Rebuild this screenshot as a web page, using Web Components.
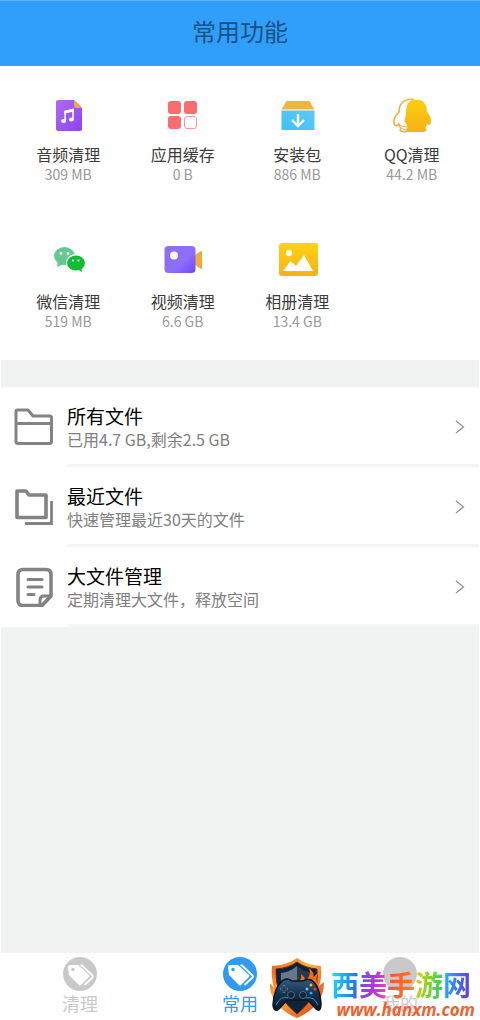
<!DOCTYPE html>
<html lang="zh-CN">
<head>
<meta charset="utf-8">
<meta name="viewport" content="width=device-width, initial-scale=1">
<title>常用功能</title>
<style>
  body {
    margin: 0;
    background: #fff;
    font-family: "Noto Sans CJK SC", sans-serif;
  }
</style>
</head>
<body>
<clean-app>
  <app-header slot="header">常用功能</app-header>

  <tool-grid>
    <tool-tile label="音频清理" size="309 MB">
      <svg width="40" height="40" viewBox="0 0 40 40" aria-hidden="true">
        <defs><linearGradient id="audio" x1="0" y1="0" x2="1" y2="1"><stop offset="0" stop-color="#ae6ced"/><stop offset="1" stop-color="#8d43f3"/></linearGradient></defs>
        <path d="M9 4H25L33 12V33Q33 35 31 35H9Q7 35 7 33V6Q7 4 9 4Z" fill="url(#audio)"/>
        <path d="M25 4L33 12H27Q25 12 25 10Z" fill="#eda83b"/>
        <path d="M16.200 25V15.500L24 13.500V23.500" fill="none" stroke="#fff" stroke-width="1.600"/>
        <path d="M15.400 14.800L24.800 12.400V15.400L15.400 17.800Z" fill="#fff"/>
        <ellipse cx="14.600" cy="25" rx="2.500" ry="2" fill="#fff"/><ellipse cx="22.400" cy="23.600" rx="2.500" ry="2" fill="#fff"/>
      </svg>
    </tool-tile>
    <tool-tile label="应用缓存" size="0 B">
      <svg width="40" height="40" viewBox="0 0 40 40" aria-hidden="true">
        <g fill="#f96d70"><rect x="5" y="5" width="13" height="13" rx="3"/><rect x="21" y="5" width="13" height="13" rx="3"/><rect x="5" y="20" width="13" height="13" rx="3"/></g>
        <rect x="21.500" y="20.500" width="12" height="12" rx="2.500" fill="#fff" stroke="#f59a9f"/>
      </svg>
    </tool-tile>
    <tool-tile label="安装包" size="886 MB">
      <svg width="40" height="40" viewBox="0 0 40 40" aria-hidden="true">
        <defs><linearGradient id="box" x1="0" y1="1" x2="1" y2="0"><stop offset="0" stop-color="#39c4fb"/><stop offset="1" stop-color="#62c8f2"/></linearGradient></defs>
        <path d="M8.500 5H31.500L36.500 13.500H3.500Z" fill="#efb63e"/>
        <path d="M3.500 14.500H36.500V34H3.500Z" fill="url(#box)"/>
        <path d="M20 18V29M14 24L20 30L26 24" fill="none" stroke="#fff" stroke-width="2.400"/>
      </svg>
    </tool-tile>
    <tool-tile label="QQ清理" size="44.2 MB">
      <svg width="40" height="40" viewBox="0 0 40 40" aria-hidden="true">
        <defs><linearGradient id="qq" x1="0" y1="0" x2="0" y2="1"><stop offset="0" stop-color="#fbcf0c"/><stop offset="1" stop-color="#f7af19"/></linearGradient></defs>
        <path d="M22 3.500C11 2 7 9 7 16C3 20 1 25 2.500 28.500C3.500 31 5.500 29 6.500 28C7 30 8 31 9 32C6 36 13 36 18 35" fill="#fff" stroke="#f1ae42" stroke-width="1.600"/>
        <path d="M24 3.500C32 3.500 35 9 35 16C39 20 40 25 38.500 28C37.500 30 36 28 35 28C34.500 30 34 31 33 32C36 34 35 36 29 36H19C14 36 13 34 16 32C15 30 14.500 29 14 27C12 27 12 24 14 19C14 13 14 4 24 3.500Z" fill="url(#qq)"/>
        <path d="M8 30Q11 32 14 30Q14 33 10 33.500Q8 33 8 30Z" fill="#fff"/>
        <path d="M6.500 28Q9 31.500 14 30L16 33Q13 35 9 32Q7 31 6.500 28Z" fill="none" stroke="#f1ae42" stroke-width="1"/>
      </svg>
    </tool-tile>
    <tool-tile label="微信清理" size="519 MB">
      <svg width="40" height="40" viewBox="0 0 40 40" aria-hidden="true">
        <ellipse cx="15.500" cy="13" rx="10.500" ry="9" fill="#64c991"/><path d="M9 18L8 24L15 21Z" fill="#64c991"/>
        <g fill="#fff"><circle cx="12" cy="10.500" r="1.400"/><circle cx="19" cy="10.500" r="1.400"/><ellipse cx="27" cy="19.500" rx="10" ry="8.500"/></g>
        <ellipse cx="27" cy="20" rx="9" ry="7.500" fill="#10bd35"/><path d="M28 26L33 29L32 23Z" fill="#10bd35"/>
        <g fill="#fff"><circle cx="24" cy="17.500" r="1.100"/><circle cx="29.500" cy="17.500" r="1.100"/></g>
      </svg>
    </tool-tile>
    <tool-tile label="视频清理" size="6.6 GB">
      <svg width="40" height="40" viewBox="0 0 40 40" aria-hidden="true">
        <defs><linearGradient id="video" x1="0" y1="0" x2="1" y2="1"><stop offset="0" stop-color="#8f6ef0"/><stop offset=".6" stop-color="#8b6ffb"/><stop offset="1" stop-color="#7344f5"/></linearGradient></defs>
        <path d="M32 12L38 8Q39 8 39 9V25Q39 26 38 26L32 22Z" fill="#f3ab38"/>
        <rect x="1.500" y="3" width="31" height="27" rx="4" fill="url(#video)"/>
        <circle cx="11" cy="12.500" r="4" fill="#fff"/>
      </svg>
    </tool-tile>
    <tool-tile label="相册清理" size="13.4 GB">
      <svg width="40" height="40" viewBox="0 0 40 40" aria-hidden="true">
        <defs><linearGradient id="photo" x1="0" y1="0" x2="0" y2="1"><stop offset="0" stop-color="#fbd313"/><stop offset="1" stop-color="#fbb117"/></linearGradient></defs>
        <rect x="1" y="3" width="39" height="33" rx="3" fill="url(#photo)" transform="translate(0 -3)"/>
        <circle cx="11" cy="10" r="3.200" fill="#fff"/>
        <path d="M5 28L12.500 18L18 23L26 12L35 28Z" fill="#fff"/>
      </svg>
    </tool-tile>
  </tool-grid>

  <file-list>
    <file-row heading="所有文件" detail="已用4.7 GB,剩余2.5 GB">
      <svg width="40" height="40" viewBox="0 0 40 40" fill="none" stroke="#838383" stroke-width="3" stroke-linejoin="round" aria-hidden="true">
        <path d="M4.500 3H15L20 9H36.500Q38.500 9 38.500 11V34.500Q38.500 36.500 36.500 36.500H5Q3 36.500 3 34.500V4.500Q3 3 4.500 3ZM3 16.500H38.500"/>
      </svg>
    </file-row>
    <file-row heading="最近文件" detail="快速管理最近30天的文件">
      <svg width="40" height="40" viewBox="0 0 40 40" fill="none" stroke="#838383" stroke-width="3.600" stroke-linejoin="round" aria-hidden="true">
        <path d="M4 4H13L16 8H33V30.500H4Z"/><path d="M12 36.500H38.500V14" stroke-width="2.800" stroke-linejoin="miter"/>
      </svg>
    </file-row>
    <file-row heading="大文件管理" detail="定期清理大文件，释放空间">
      <svg width="40" height="40" viewBox="0 0 40 40" fill="none" stroke="#838383" stroke-width="3.600" stroke-linejoin="round" aria-hidden="true">
        <path d="M10 2.500H33Q38 2.500 38 7.500V29L29 38.500H10Q5 38.500 5 33.500V7.500Q5 2.500 10 2.500Z"/>
        <path d="M27 38V33Q27 29 31 29H38" stroke-width="3"/><path d="M15 12.500H29M15 20H29M15 27.500H21" stroke-width="3" stroke-linecap="round"/>
      </svg>
    </file-row>
  </file-list>

  <tab-bar slot="footer">
    <tab-item label="清理"></tab-item>
    <tab-item label="常用" active></tab-item>
    <tab-item label="我的" plain></tab-item>
  </tab-bar>
  <site-mark slot="footer"></site-mark>
</clean-app>

<script>
/** Base class, puts the markup returned by render() in an open shadow root */
class BaseElement extends HTMLElement {
  constructor() {
    super();
    this.attachShadow({mode: 'open'});
  }

  connectedCallback() {
    this.shadowRoot.innerHTML = this.render();
  }
}

/** Page frame: header, scrolling content, footer */
class CleanApp extends BaseElement {
  render() {
    return `
      <style>
        :host { display: flex; flex-direction: column; min-height: 100vh; position: relative; }
        main { flex: 1; background: #f0f3f2; margin: 0 1px; }
      </style>
      <slot name="header"></slot>
      <main><slot></slot></main>
      <slot name="footer"></slot>`;
  }
}

class AppHeader extends BaseElement {
  render() {
    return `
      <style>
        :host { display: block; background: #309ffc; border-top: 1px solid #5bb6fd; }
        h1 {
          margin: 0;
          padding: 12px 0 17px;
          font-size: 24px;
          line-height: 36px;
          font-weight: 400;
          text-align: center;
          color: #165286;
        }
      </style>
      <header><h1><slot></slot></h1></header>`;
  }
}

class ToolGrid extends BaseElement {
  render() {
    return `
      <style>
        :host {
          display: grid;
          grid-template-columns: repeat(4, 1fr);
          padding: 0 10px;
          background: #fff;
        }
      </style>
      <slot></slot>`;
  }
}

/** One cleaning tool, the icon goes in the slot */
class ToolTile extends BaseElement {
  render() {
    return `
      <style>
        :host { display: block; }
        button {
          display: flex;
          flex-direction: column;
          align-items: center;
          width: 100%;
          height: 147px;
          padding: 30px 0 0;
          border: 0;
          background: none;
          font: inherit;
          cursor: pointer;
        }
        ::slotted(svg) { display: block; margin-left: 1px; }
        .label { margin-top: 6px; font-size: 16px; line-height: 24px; color: #3c3c3c; }
        .size { font-size: 14px; line-height: 16px; color: #999; }
      </style>
      <button type="button">
        <slot></slot>
        <span class="label">${this.getAttribute('label')}</span>
        <span class="size">${this.getAttribute('size')}</span>
      </button>`;
  }
}

class FileList extends BaseElement {
  render() {
    return `
      <style>
        :host { display: block; margin-top: 27px; background: #fff; }
      </style>
      <slot></slot>`;
  }
}

/** Row with icon, two lines of text and a chevron */
class FileRow extends BaseElement {
  render() {
    return `
      <style>
        :host { display: block; }
        a {
          display: flex;
          align-items: stretch;
          gap: 14px;
          padding-left: 12px;
          color: inherit;
          text-decoration: none;
        }
        ::slotted(svg) { display: block; align-self: center; flex: none; }
        .body {
          display: flex;
          align-items: center;
          justify-content: space-between;
          flex: 1;
          padding: 16px 12px 14px 0;
          border-bottom: 3px solid #f4f5f5;
        }
        .heading { display: block; font-size: 19px; line-height: 25px; color: #000; }
        .detail { display: block; font-size: 16px; line-height: 22px; color: #808080; }
      </style>
      <a href="#">
        <slot></slot>
        <span class="body">
          <span>
            <span class="heading">${this.getAttribute('heading')}</span>
            <span class="detail">${this.getAttribute('detail')}</span>
          </span>
          <svg width="14" height="16" viewBox="0 0 14 16" fill="none" stroke="#939393" stroke-width="1.300" aria-hidden="true"><path d="M3 2L10.500 8L3 14"/></svg>
        </span>
      </a>`;
  }
}

class TabBar extends BaseElement {
  render() {
    return `
      <style>
        :host { display: block; background: #fff; }
        nav { display: grid; grid-template-columns: repeat(3, 1fr); }
      </style>
      <nav><slot></slot></nav>`;
  }
}

class TabItem extends BaseElement {
  render() {
    const color = this.hasAttribute('active') ? '#309af0' : '#c9c9c9';
    const tags = `
      <path d="M5 10Q5 8 7 8L15 8L26 18Q27 19 26 20L18 28Q17 29 16 28L6 18Z" fill="#fff"/>
      <circle cx="10" cy="12.500" r="1.700" fill="${color}"/>
      <path d="M17.500 8.500H19L29.500 18.500Q30.500 19.500 29.500 20.500L21.500 28" fill="none" stroke="#fff" stroke-width="1.800"/>`;
    return `
      <style>
        :host { display: block; color: ${color}; }
        button {
          display: flex;
          flex-direction: column;
          align-items: center;
          width: 100%;
          padding: 4px 0;
          border: 0;
          background: none;
          color: inherit;
          font: inherit;
          font-size: 18px;
          line-height: 25px;
          cursor: pointer;
        }
      </style>
      <button type="button">
        <svg width="34" height="34" viewBox="0 0 34 34" aria-hidden="true">
          <circle cx="17" cy="17" r="17" fill="${color}"/>
          ${this.hasAttribute('plain') ? '' : tags}
        </svg>
        <span>${this.getAttribute('label')}</span>
      </button>`;
  }
}

/** Site badge floating over the bottom right corner */
class SiteMark extends BaseElement {
  render() {
    return `
      <style>
        :host {
          position: absolute;
          right: 5px;
          bottom: 0;
          display: flex;
          align-items: flex-end;
          gap: 4px;
          pointer-events: none;
        }
        svg { display: block; }
        .name { display: flex; padding-right: 4px; font-size: 28px; line-height: 32px; font-weight: 700; }
        .name span { color: transparent; background: var(--g); -webkit-background-clip: text; background-clip: text; }
        .url {
          font: italic 700 17px/20px "Open Sans", sans-serif;
          color: #f0622d;
          text-align: right;
        }
      </style>
      <svg width="60" height="64" viewBox="0 0 60 64" aria-hidden="true">
        <defs>
          <linearGradient id="fire" x1="0" y1="0" x2="1" y2="1"><stop offset="0" stop-color="#e85416"/><stop offset=".4" stop-color="#ffb13b"/><stop offset="1" stop-color="#da3511"/></linearGradient>
          <linearGradient id="pad" x1="0" y1="0" x2="0" y2="1"><stop offset="0" stop-color="#315b80"/><stop offset=".5" stop-color="#142f4b"/><stop offset="1" stop-color="#071a31"/></linearGradient>
        </defs>
        <path d="M30 2Q39 9 54 10Q55 23 52 30L57 26Q57 38 51 46Q44 56 30 62Q15 56 9 46Q2 37 3 27L7 32Q4 21 5 10Q21 9 30 2Z" fill="url(#fire)"/>
        <path d="M30 6Q38 12 50 13Q53 40 30 58Q7 40 9 13Q22 12 30 6Z" fill="#102237" stroke="#672716"/>
        <path d="M30 10Q23 16 14 17Q13 29 18 39L30 29Z" fill="#66798c"/>
        <path d="M30 10V32L45 31L47 17Q37 16 30 10Z" fill="#263b50"/>
        <path d="M27 30Q36 25 34 18Q39 22 38 25Q45 20 42 12Q48 17 46 21L51 17Q48 23 51 29L43 33Z" fill="#f56a16"/>
        <path d="M33 31Q42 27 41 22Q45 24 44 27L48 24L46 32Z" fill="#ffc14c"/>
        <path d="M15 25Q20 21 25 25H36Q42 21 47 26Q53 33 54 47Q54 57 49 53L41 44H20L12 53Q7 57 6 49Q7 32 15 25Z" fill="url(#pad)" stroke="#081421" stroke-width="1.500"/>
        <path d="M17 29V37M13 33H21" stroke="#56738b" stroke-width="2.500"/><path d="M17 30V36M14 33H20" stroke="#132231"/>
        <circle cx="24" cy="39" r="3.500" fill="#112438" stroke="#496985"/><circle cx="36" cy="39" r="3.500" fill="#112438" stroke="#496985"/>
        <circle cx="44" cy="29" r="1.500" fill="#ffb22e"/><circle cx="48" cy="33" r="1.500" fill="#e43e2b"/><circle cx="44" cy="37" r="1.500" fill="#2ba8e8"/><circle cx="40" cy="33" r="1.500" fill="#6fc3e8"/>
        <path d="M9 49Q14 39 21 42M51 49Q47 40 39 42" fill="none" stroke="#288fc5"/>
      </svg>
      <div>
        <div class="name">
          <span style="--g: linear-gradient(100deg, #27e1ee, #1798ef 60%, #4354e8)">西</span>
          <span style="--g: linear-gradient(100deg, #5d57ef, #af35e3 50%, #f34a9b)">美</span>
          <span style="--g: linear-gradient(100deg, #f74c50, #ff6b22 60%, #fc9321)">手</span>
          <span style="--g: linear-gradient(100deg, #f7c51e, #7dd52a 50%, #20cf75)">游</span>
          <span style="--g: linear-gradient(100deg, #22caf1, #3673ee 50%, #722ce8)">网</span>
        </div>
        <div class="url">www.hanxm.com</div>
      </div>`;
  }
}

customElements.define('clean-app', CleanApp);
customElements.define('app-header', AppHeader);
customElements.define('tool-grid', ToolGrid);
customElements.define('tool-tile', ToolTile);
customElements.define('file-list', FileList);
customElements.define('file-row', FileRow);
customElements.define('tab-bar', TabBar);
customElements.define('tab-item', TabItem);
customElements.define('site-mark', SiteMark);
</script>
</body>
</html>
